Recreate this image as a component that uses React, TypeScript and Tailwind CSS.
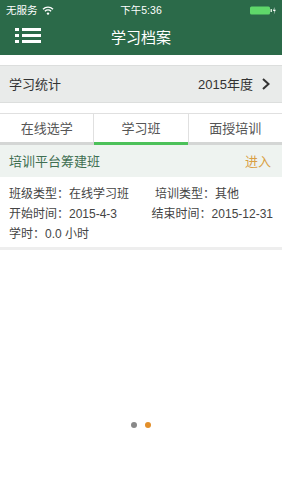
import React from "react";

const font = { fontFamily: '"Liberation Sans", "Noto Sans CJK SC", sans-serif' };

function Hamburger() {
  return (
    <svg width="26" height="16" viewBox="0 0 26 16">
      {[1, 7, 13].map((y) => (
        <g key={y} fill="#ffffff">
          <rect x="0" y={y - 1} width="4" height="3" />
          <rect x="7" y={y - 1} width="19" height="3" />
        </g>
      ))}
    </svg>
  );
}

function Wifi() {
  return (
    <svg width="12" height="9" viewBox="0 0 12 9">
      <path d="M1 3.2 A7 7 0 0 1 11 3.2" stroke="#fff" strokeWidth="1.4" fill="none" />
      <path d="M2.9 5.2 A4.4 4.4 0 0 1 9.1 5.2" stroke="#fff" strokeWidth="1.4" fill="none" />
      <circle cx="6" cy="7.6" r="1.2" fill="#fff" />
    </svg>
  );
}

function Battery() {
  return (
    <svg width="26" height="9" viewBox="0 0 26 9">
      <rect x="0" y="0.5" width="20" height="8" rx="1.5" fill="#5fd86a" />
      <rect x="20.5" y="3" width="1.5" height="3" fill="#cfe8d4" />
      <path d="M24.5 1 L23 5 L24.6 5 L23.8 8.5 L25.8 3.8 L24.3 3.8 Z" fill="#fff" />
    </svg>
  );
}

export default function App() {
  return (
    <div className="w-[282px] h-[500px] bg-white overflow-hidden flex flex-col leading-none" style={font}>
      <div className="bg-[#2b6a49] h-[55px] flex flex-col">
        <div className="h-[20px] relative flex items-center px-[6px] text-[10.5px] text-white">
          <div className="flex items-center gap-[4px]">
            <span>无服务</span>
            <Wifi />
          </div>
          <div className="absolute left-0 right-0 top-0 h-[20px] flex items-center justify-center">
            下午5:36
          </div>
          <div className="ml-auto flex items-center">
            <Battery />
          </div>
        </div>
        <div className="flex-1 relative flex items-center justify-center">
          <div className="absolute left-[15px] top-[8px]">
            <Hamburger />
          </div>
          <span className="text-white text-[15px]">学习档案</span>
        </div>
      </div>
      <div className="h-[10px]" />
      <div className="h-[38px] bg-[#e9ebea] border-y border-[#dcdedd] flex items-center px-[9px] text-[13px] text-[#333]">
        <span>学习统计</span>
        <span className="ml-auto">2015年度</span>
        <svg width="10" height="14" viewBox="0 0 10 14" className="ml-[8px] mr-[2px]">
          <path d="M2 2 L7.5 7 L2 12" stroke="#333" strokeWidth="2" fill="none" />
        </svg>
      </div>
      <div className="h-[10px]" />
      <div className="border-t border-[#e0e0e0] flex h-[29px] text-[13px] text-[#555]">
        <div className="flex-1 flex items-center justify-center">在线选学</div>
        <div className="flex-1 flex items-center justify-center border-x border-[#e0e0e0]">学习班</div>
        <div className="flex-1 flex items-center justify-center">面授培训</div>
      </div>
      <div className="flex h-[3px] bg-[#d4d6d5]">
        <div className="flex-1" />
        <div className="flex-1 bg-[#4cc15a]" />
        <div className="flex-1" />
      </div>
      <div className="h-[32px] bg-[#eef3f0] flex items-center px-[9px] text-[13px]">
        <span className="text-[#3f6f52]">培训平台筹建班</span>
        <span className="ml-auto text-[#d9a043] mr-[2px]">进入</span>
      </div>
      <div className="px-[9px] pt-[8px] pb-[5px] text-[12px] text-[#444] flex flex-col gap-[3px] border-b-[3px] border-[#eeeeee] whitespace-nowrap">
        <div className="flex h-[17px] items-center">
          <span className="w-[146px]">班级类型：在线学习班</span>
          <span>培训类型：其他</span>
        </div>
        <div className="flex h-[17px] items-center">
          <span className="w-[146px]">开始时间：2015-4-3</span>
          <span>结束时间：2015-12-31</span>
        </div>
        <div className="flex h-[17px] items-center">
          <span>学时：0.0 小时</span>
        </div>
      </div>
      <div className="flex-1 flex items-end justify-center pb-[72px]">
        <div className="flex gap-[8px]">
          <div className="w-[6px] h-[6px] rounded-full bg-[#888]" />
          <div className="w-[6px] h-[6px] rounded-full bg-[#e38f2a]" />
        </div>
      </div>
    </div>
  );
}
